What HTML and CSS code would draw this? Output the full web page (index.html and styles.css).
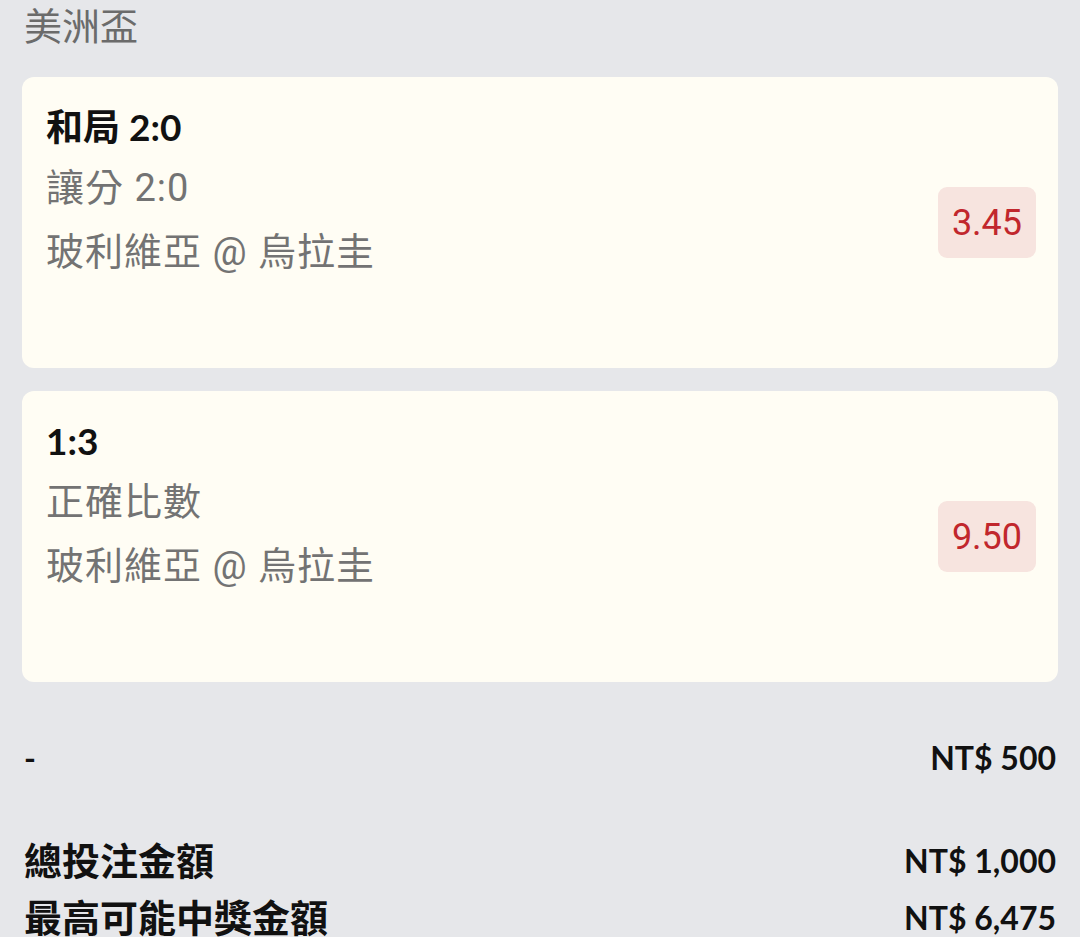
FILE: index.html
```html
<!DOCTYPE html>
<html lang="zh-Hant">
<head>
<meta charset="utf-8">
<link rel="stylesheet" href="styles.css">
</head>
<body>
<div class="page">
  <div class="league">美洲盃</div>
  <div class="card">
    <div class="info">
      <div class="pick">和局 2:0</div>
      <div class="sub">讓分 2:0</div>
      <div class="sub">玻利維亞 @ 烏拉圭</div>
    </div>
    <div class="odds">3.45</div>
  </div>
  <div class="card">
    <div class="info">
      <div class="pick">1:3</div>
      <div class="sub">正確比數</div>
      <div class="sub">玻利維亞 @ 烏拉圭</div>
    </div>
    <div class="odds">9.50</div>
  </div>
  <div class="row stake">
    <span>-</span>
    <span>NT$ 500</span>
  </div>
  <div class="totals">
    <div class="row total">
      <span class="label">總投注金額</span>
      <span>NT$ 1,000</span>
    </div>
    <div class="row total">
      <span class="label">最高可能中獎金額</span>
      <span>NT$ 6,475</span>
    </div>
  </div>
</div>
</body>
</html>
```

FILE: styles.css
```css
html, body {
  margin: 0;
  padding: 0;
  background: #e6e7ea;
}
body {
  font-family: "Roboto", "Noto Sans CJK TC", sans-serif;
  overflow: hidden;
}
.page {
  padding: 0 22px;
}
.league {
  color: #6b6b6b;
  font-size: 38px;
  line-height: 54px;
  padding-left: 2px;
  margin-bottom: 23px;
}
.card {
  background: #fffdf4;
  border-radius: 12px;
  height: 291px;
  box-sizing: border-box;
  padding: 21px 22px 0 24px;
  display: flex;
  align-items: center;
  justify-content: space-between;
  margin-bottom: 23px;
}
.info {
  align-self: flex-start;
  display: flex;
  flex-direction: column;
}
.pick {
  font-family: "Lato", "Noto Sans CJK TC", sans-serif;
  font-weight: 700;
  font-size: 37px;
  line-height: 58px;
  color: #111;
}
.sub {
  color: #737373;
  font-size: 38px;
  line-height: 64px;
  letter-spacing: 1px;
}
.odds {
  background: #f7e4df;
  color: #c1272d;
  border-radius: 9px;
  width: 98px;
  height: 71px;
  display: flex;
  align-items: center;
  justify-content: center;
  font-size: 36px;
  margin-top: -21px;
}
.row {
  display: flex;
  justify-content: space-between;
  align-items: center;
  font-family: "Lato", "Noto Sans CJK TC", sans-serif;
  font-weight: 700;
  color: #111;
  padding: 0 2px;
}
.stake {
  margin-top: 50px;
  font-size: 32px;
  line-height: 52px;
}
.totals {
  margin-top: 48px;
}
.total {
  font-size: 32px;
  line-height: 57px;
}
.label {
  font-size: 38px;
}
```
